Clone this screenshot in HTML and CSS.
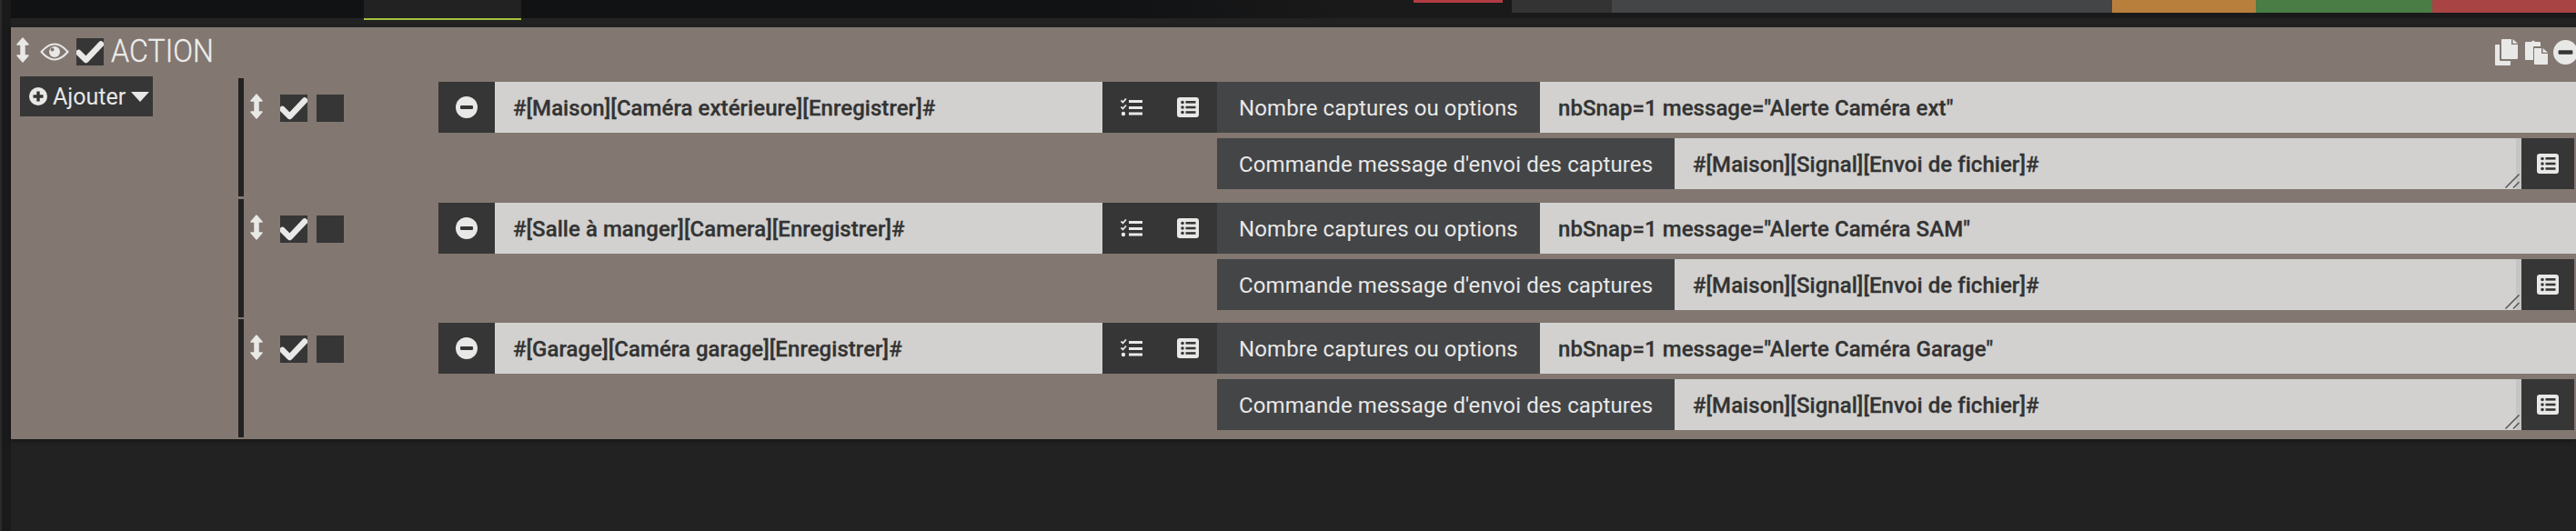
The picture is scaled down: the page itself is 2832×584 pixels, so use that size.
FILE: index.html
```html
<!DOCTYPE html>
<html lang="fr">
  <head>
    <meta charset="UTF-8" />
    <meta name="viewport" content="width=device-width, initial-scale=1.0" />
    <title>Action</title>
    <link rel="stylesheet" href="styles.css">
  </head>
  <body>
    <svg class="sprite" xmlns="http://www.w3.org/2000/svg">
      <symbol id="i-move" viewBox="0 0 14 28">
        <path d="M7 1 L13 8 H9 V20 H13 L7 27 L1 20 H5 V8 H1 Z" fill="currentColor" stroke="currentColor" stroke-width="1.5" stroke-linejoin="round"/>
      </symbol>
      <symbol id="i-check" viewBox="0 0 30 30">
        <path d="M2.5 16 L10.5 24 L27 6.5" fill="none" stroke="currentColor" stroke-width="6.5" stroke-linecap="round" stroke-linejoin="round"/>
      </symbol>
      <symbol id="i-eye" viewBox="0 0 32 20">
        <path d="M1.5 10 Q16 -7 30.5 10 Q16 27 1.5 10 Z" fill="none" stroke="currentColor" stroke-width="2"/>
        <circle cx="16" cy="10" r="6" fill="currentColor"/>
        <circle cx="13.5" cy="7.5" r="2" fill="#827771"/>
      </symbol>
      <symbol id="i-plus" viewBox="0 0 20 20">
        <circle cx="10" cy="10" r="10" fill="currentColor"/>
        <path d="M4.5 10 H15.5 M10 4.5 V15.5" stroke="#363636" stroke-width="3.4"/>
      </symbol>
      <symbol id="i-minus" viewBox="0 0 24 24">
        <circle cx="12" cy="12" r="12" fill="currentColor"/>
        <rect x="5" y="10" width="14" height="4" rx="1" fill="#363636"/>
      </symbol>
      <symbol id="i-tasks" viewBox="0 0 24 20">
        <path d="M0.5 2.5 L2.5 4.5 L6 0.5 M0.5 9.5 L2.5 11.5 L6 7.5" fill="none" stroke="currentColor" stroke-width="1.8"/>
        <circle cx="3" cy="17" r="2.2" fill="currentColor"/>
        <rect x="9" y="2" width="15" height="3" fill="currentColor"/>
        <rect x="9" y="9" width="15" height="3" fill="currentColor"/>
        <rect x="9" y="15.5" width="15" height="3" fill="currentColor"/>
      </symbol>
      <symbol id="i-listalt" viewBox="0 0 24 22">
        <rect width="24" height="22" rx="3" fill="currentColor"/>
        <g fill="#363636">
          <circle cx="6" cy="5.5" r="1.8"/>
          <circle cx="6" cy="11" r="1.8"/>
          <circle cx="6" cy="16.5" r="1.8"/>
          <rect x="9.5" y="4" width="11" height="2.6"/>
          <rect x="9.5" y="9.7" width="11" height="2.6"/>
          <rect x="9.5" y="15.2" width="11" height="2.6"/>
        </g>
      </symbol>
      <symbol id="i-copy" viewBox="0 0 25 29">
        <path d="M7 1 Q7 0 8 0 H18 V6 H25 V21 Q25 22 24 22 H8 Q7 22 7 21 Z M19.5 0 L25 4.8 H19.5 Z" fill="currentColor"/>
        <path d="M0 7 Q0 6 1 6 H5 V23 Q5 24 6 24 H17 V28 Q17 29 16 29 H1 Q0 29 0 28 Z" fill="currentColor"/>
      </symbol>
      <symbol id="i-paste" viewBox="0 0 25 28">
        <path d="M1 3 H7 Q9 0 11 3 H16 Q17 3 17 4 V8 H10 Q9 8 9 9 V23 H1 Q0 23 0 22 V4 Q0 3 1 3 Z" fill="currentColor"/>
        <path d="M10 10 H18 V16 H25 V27 Q25 28 24 28 H11 Q10 28 10 27 Z M19.5 10 L25 14.8 H19.5 Z" fill="currentColor"/>
      </symbol>
    </svg>

    <div class="app">
      <div class="rail"></div>
      <div class="main">
        <div class="topbar">
          <div class="tab"></div>
          <div class="alert"></div>
          <div class="bar bar-dark"></div>
          <div class="bar bar-grey"></div>
          <div class="bar bar-orange"></div>
          <div class="bar bar-green"></div>
          <div class="bar bar-red"></div>
        </div>

        <div class="panel">
          <div class="panel-head">
            <svg class="icon-move"><use href="#i-move"/></svg>
            <svg class="icon-eye"><use href="#i-eye"/></svg>
            <span class="checkbox"><svg><use href="#i-check"/></svg></span>
            <span class="panel-title">ACTION</span>
            <div class="panel-tools">
              <svg class="icon-copy"><use href="#i-copy"/></svg>
              <svg class="icon-paste"><use href="#i-paste"/></svg>
              <svg class="icon-remove"><use href="#i-minus"/></svg>
            </div>
          </div>

          <div class="panel-body">
            <div class="side">
              <button class="add-btn">
                <svg class="icon-plus"><use href="#i-plus"/></svg>
                Ajouter
                <span class="caret"></span>
              </button>
            </div>

            <div class="rows">
              <div class="row">
                <div class="row-tools">
                  <svg class="icon-move"><use href="#i-move"/></svg>
                  <span class="checkbox"><svg><use href="#i-check"/></svg></span>
                  <span class="checkbox"></span>
                </div>
                <div class="fields">
                  <div class="line">
                    <div class="btn-remove"><svg class="icon-minus"><use href="#i-minus"/></svg></div>
                    <div class="value value-cmd">#[Maison][Caméra extérieure][Enregistrer]#</div>
                    <div class="btn-icon"><svg class="icon-tasks"><use href="#i-tasks"/></svg></div>
                    <div class="btn-icon"><svg class="icon-listalt"><use href="#i-listalt"/></svg></div>
                    <div class="label label-options">Nombre captures ou options</div>
                    <div class="value">nbSnap=1 message="Alerte Caméra ext"</div>
                  </div>
                  <div class="line line-sub">
                    <div class="label label-send">Commande message d'envoi des captures</div>
                    <div class="value value-area">
                      #[Maison][Signal][Envoi de fichier]#
                      <svg class="grip" viewBox="0 0 16 16"><path d="M0.5 15.5 L15.5 0.5 M9 15.5 L15.5 9" fill="none" stroke="#555" stroke-width="1.5"/></svg>
                    </div>
                    <div class="btn-list"><svg class="icon-listalt"><use href="#i-listalt"/></svg></div>
                  </div>
                </div>
              </div>

              <div class="row">
                <div class="row-tools">
                  <svg class="icon-move"><use href="#i-move"/></svg>
                  <span class="checkbox"><svg><use href="#i-check"/></svg></span>
                  <span class="checkbox"></span>
                </div>
                <div class="fields">
                  <div class="line">
                    <div class="btn-remove"><svg class="icon-minus"><use href="#i-minus"/></svg></div>
                    <div class="value value-cmd">#[Salle à manger][Camera][Enregistrer]#</div>
                    <div class="btn-icon"><svg class="icon-tasks"><use href="#i-tasks"/></svg></div>
                    <div class="btn-icon"><svg class="icon-listalt"><use href="#i-listalt"/></svg></div>
                    <div class="label label-options">Nombre captures ou options</div>
                    <div class="value">nbSnap=1 message="Alerte Caméra SAM"</div>
                  </div>
                  <div class="line line-sub">
                    <div class="label label-send">Commande message d'envoi des captures</div>
                    <div class="value value-area">
                      #[Maison][Signal][Envoi de fichier]#
                      <svg class="grip" viewBox="0 0 16 16"><path d="M0.5 15.5 L15.5 0.5 M9 15.5 L15.5 9" fill="none" stroke="#555" stroke-width="1.5"/></svg>
                    </div>
                    <div class="btn-list"><svg class="icon-listalt"><use href="#i-listalt"/></svg></div>
                  </div>
                </div>
              </div>

              <div class="row">
                <div class="row-tools">
                  <svg class="icon-move"><use href="#i-move"/></svg>
                  <span class="checkbox"><svg><use href="#i-check"/></svg></span>
                  <span class="checkbox"></span>
                </div>
                <div class="fields">
                  <div class="line">
                    <div class="btn-remove"><svg class="icon-minus"><use href="#i-minus"/></svg></div>
                    <div class="value value-cmd">#[Garage][Caméra garage][Enregistrer]#</div>
                    <div class="btn-icon"><svg class="icon-tasks"><use href="#i-tasks"/></svg></div>
                    <div class="btn-icon"><svg class="icon-listalt"><use href="#i-listalt"/></svg></div>
                    <div class="label label-options">Nombre captures ou options</div>
                    <div class="value">nbSnap=1 message="Alerte Caméra Garage"</div>
                  </div>
                  <div class="line line-sub">
                    <div class="label label-send">Commande message d'envoi des captures</div>
                    <div class="value value-area">
                      #[Maison][Signal][Envoi de fichier]#
                      <svg class="grip" viewBox="0 0 16 16"><path d="M0.5 15.5 L15.5 0.5 M9 15.5 L15.5 9" fill="none" stroke="#555" stroke-width="1.5"/></svg>
                    </div>
                    <div class="btn-list"><svg class="icon-listalt"><use href="#i-listalt"/></svg></div>
                  </div>
                </div>
              </div>
            </div>
          </div>
        </div>
      </div>
    </div>
  </body>
</html>
```

FILE: styles.css
```css
html,
body {
  margin: 0;
  padding: 0;
  height: 100%;
  overflow: hidden;
  font-family: Roboto, "Liberation Sans", sans-serif;
  background-color: #222222;
}

.sprite {
  display: none;
}

svg {
  display: block;
  flex: none;
  color: #e8e8e7;
}

.app {
  display: flex;
  height: 100vh;
}

.rail {
  width: 10px;
  flex: none;
  background: #1a1a1a;
  border-left: 2px solid #2a2a2a;
}

.main {
  flex-grow: 1;
  min-width: 0;
}

/* top strip */
.topbar {
  display: flex;
  height: 20px;
  margin-bottom: 10px;
  background: linear-gradient(to right, #111214 0, #111214 1200px, #1a1a1a 1500px);
}

.tab {
  width: 173px;
  height: 20px;
  margin-left: 388px;
  background: #222222;
  border-bottom: 2px solid #a3c23f;
}

.alert {
  width: 98px;
  height: 3px;
  margin-left: 981px;
  margin-right: 10px;
  background: #b23c44;
}

.bar {
  height: 14px;
}

.bar-dark {
  width: 110px;
  background: #333333;
}

.bar-grey {
  width: 550px;
  background: #444547;
}

.bar-orange {
  width: 158px;
  background: #b87f3c;
}

.bar-green {
  width: 194px;
  background: #4a7c45;
}

.bar-red {
  width: 158px;
  background: #a84444;
}

/* panel */
.panel {
  height: 453px;
  background: #827771;
  box-shadow: 0 2px 5px rgba(0, 0, 0, 0.35);
  overflow: hidden;
}

.panel-head {
  display: flex;
  align-items: center;
  height: 54px;
  padding-left: 6px;
  box-sizing: border-box;
}

.icon-move {
  width: 14px;
  height: 28px;
}

.panel-head .icon-move {
  margin-top: -4px;
}

.icon-eye {
  width: 32px;
  height: 20px;
  margin: 0 8px 0 12px;
}

.checkbox {
  display: block;
  flex: none;
  width: 30px;
  height: 30px;
  background: #363636;
}

.checkbox svg {
  width: 30px;
  height: 30px;
}

.panel-title {
  margin-left: 8px;
  font-size: 35px;
  font-weight: 300;
  line-height: 54px;
  color: #eeeeec;
  transform: scaleX(0.92);
  transform-origin: left center;
  -webkit-text-stroke: 0.3px #eeeeec;
}

.panel-tools {
  display: flex;
  align-items: center;
  margin-left: auto;
  margin-right: -2px;
}

.icon-copy {
  width: 25px;
  height: 29px;
}

.icon-paste {
  width: 25px;
  height: 28px;
  margin-left: 8px;
}

.icon-remove {
  width: 27px;
  height: 27px;
  margin-left: 6px;
}

.panel-body {
  display: flex;
}

.side {
  width: 250px;
  flex: none;
}

.add-btn {
  display: flex;
  align-items: center;
  height: 44px;
  width: 146px;
  margin-left: 10px;
  padding: 0 0 0 10px;
  box-sizing: border-box;
  border: none;
  background: #363636;
  color: #e8e8e7;
  font-family: inherit;
  font-size: 25px;
}

.icon-plus {
  width: 20px;
  height: 20px;
  margin-right: 6px;
}

.caret {
  width: 0;
  height: 0;
  margin-left: 6px;
  border-left: 10px solid transparent;
  border-right: 10px solid transparent;
  border-top: 11px solid #e8e8e7;
}

.rows {
  flex-grow: 1;
  min-width: 0;
  padding-top: 2px;
}

.row {
  display: flex;
  height: 130px;
  margin-bottom: 2.5px;
  border-left: 6px solid #222222;
}

.row-tools {
  display: flex;
  align-items: flex-start;
  gap: 10px;
  width: 214px;
  flex: none;
  padding: 18px 0 0 7px;
  box-sizing: border-box;
}

.row-tools .icon-move {
  margin-right: 9px;
  margin-top: -1px;
}

.fields {
  flex-grow: 1;
  min-width: 0;
  padding-top: 4px;
}

.line {
  display: flex;
  height: 56px;
}

.line-sub {
  margin-top: 6px;
  margin-left: 856px;
  margin-right: 2px;
}

.btn-remove {
  display: flex;
  align-items: center;
  justify-content: center;
  width: 62px;
  flex: none;
  background: #363636;
}

.icon-minus {
  width: 24px;
  height: 24px;
}

.value {
  display: flex;
  align-items: center;
  flex: 1 1 0;
  min-width: 0;
  padding: 2px 0 0 20px;
  box-sizing: border-box;
  background: #d2d1cf;
  color: #333333;
  font-size: 24px;
  font-weight: 500;
  letter-spacing: 0.05px;
  -webkit-text-stroke: 0.3px #333333;
  white-space: nowrap;
}

.value-cmd {
  flex: none;
  width: 668px;
}

.value-area {
  position: relative;
  border-right: 6px solid #c5c5c3;
}

.grip {
  position: absolute;
  right: -4px;
  bottom: 1px;
  width: 16px;
  height: 16px;
}

.btn-icon {
  display: flex;
  align-items: center;
  justify-content: center;
  width: 63px;
  flex: none;
  background: #363636;
}

.btn-icon .icon-listalt {
  margin-left: -2px;
}

.btn-list {
  display: flex;
  align-items: center;
  justify-content: center;
  width: 58px;
  flex: none;
  background: #363636;
}

.icon-tasks {
  width: 24px;
  height: 20px;
}

.icon-listalt {
  width: 24px;
  height: 22px;
}

.label {
  display: flex;
  align-items: center;
  flex: none;
  padding: 2px 0 0 24px;
  box-sizing: border-box;
  background: #444547;
  color: #e8e8e7;
  font-size: 24px;
  letter-spacing: 0.1px;
  white-space: nowrap;
}

.label-options {
  width: 355px;
}

.label-send {
  width: 503px;
}
```
